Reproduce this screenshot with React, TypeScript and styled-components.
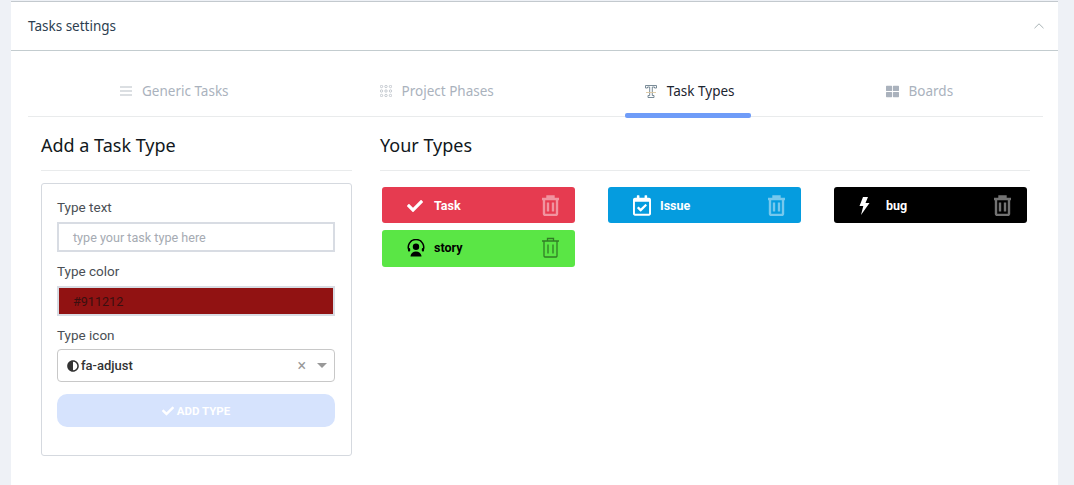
import React from 'react'
import styled, { createGlobalStyle } from 'styled-components'
import { FaAdjust, FaCheck, FaRegCalendarCheck, FaThLarge } from 'react-icons/fa'

const Global = createGlobalStyle`
  html, body {
    margin: 0;
    height: 485px;
    overflow: hidden;
    background: #eef1f6;
    font-family: Roboto, "Liberation Sans", sans-serif;
  }
`

const Card = styled.div`
  margin: 1px 16px 0 11px;
  height: 484px;
  background: #fff;
  border-top: 1px solid #c3c9ce;
  box-sizing: border-box;
`

const CardHeader = styled.div`
  height: 49px;
  box-sizing: border-box;
  border-bottom: 1px solid #c3cccf;
  padding: 0 14px 0 17px;
  display: flex;
  align-items: center;
  justify-content: space-between;
  font-family: "Noto Sans", sans-serif;
  font-size: 13.5px;
  color: #2c3e50;
`

const TabBar = styled.div`
  margin: 0 15px 0 17px;
  height: 66px;
  padding-left: 72px;
  box-sizing: border-box;
  border-bottom: 1px solid #e9ebec;
  display: flex;
  gap: 115px;
`

const Tab = styled.div<{ $active?: boolean }>`
  position: relative;
  display: flex;
  align-items: center;
  gap: 10px;
  padding: 15px 16px 0 20px;
  font-family: "Noto Sans", sans-serif;
  font-size: 13.5px;
  color: ${p => (p.$active ? '#1c2530' : '#aab2bd')};

  ${p =>
    p.$active &&
    `&::after {
      content: '';
      position: absolute;
      left: 0;
      right: 0;
      bottom: -2px;
      height: 5px;
      border-radius: 2px;
      background: #6f9cf8;
    }`}
`

const Columns = styled.div`
  display: flex;
  gap: 28px;
  padding: 0 28px 0 30px;
`

const LeftColumn = styled.div`
  width: 311px;
  flex: none;
`

const RightColumn = styled.div`
  flex: 1;
`

const ColumnTitle = styled.h3`
  margin: 0 0 12px;
  height: 54px;
  line-height: 56px;
  box-sizing: border-box;
  border-bottom: 1px solid #e9ebec;
  font-family: "Noto Sans", sans-serif;
  font-weight: 400;
  font-size: 18px;
  color: #111820;
`

const FormBox = styled.div`
  height: 273px;
  box-sizing: border-box;
  border: 1px solid #d5d9df;
  border-radius: 3px;
  padding: 14px 16px 0 15px;
`

const Label = styled.div`
  font-size: 13.5px;
  line-height: 18px;
  color: #4a4f55;
  margin-bottom: 6px;
`

const TextInput = styled.div<{ $bg?: string }>`
  height: 30px;
  box-sizing: border-box;
  border: 2px solid #d8dce3;
  background: ${p => p.$bg || '#fff'};
  display: flex;
  align-items: center;
  margin-bottom: 10px;
  padding-left: 14px;
  font-size: 12.6px;
  color: ${p => (p.$bg ? '#3a1010' : '#a6abb3')};
`

const SelectBox = styled.div`
  height: 33px;
  margin-top: -1px;
  box-sizing: border-box;
  border: 1px solid #c8c8c8;
  border-radius: 4px;
  display: flex;
  align-items: center;
  padding: 0 7px 0 9px;
  font-size: 13px;
  font-weight: 500;
  color: #333;
`

const SelectValue = styled.span`
  flex: 1;
  display: flex;
  align-items: center;
  gap: 2px;
`

const Clear = styled.span`
  color: #999;
  font-size: 16px;
  font-weight: 400;
  margin-right: 11px;
`

const Caret = styled.span`
  width: 0;
  height: 0;
  border-left: 5px solid transparent;
  border-right: 5px solid transparent;
  border-top: 5px solid #999;
`

const AddButton = styled.div`
  margin-top: 12px;
  height: 33px;
  border-radius: 10px;
  background: #d6e3fd;
  color: #fff;
  display: flex;
  align-items: center;
  justify-content: center;
  gap: 3px;
  font-size: 11.5px;
  font-weight: 700;
`

const TypeGrid = styled.div`
  display: grid;
  grid-template-columns: repeat(3, 192.5px);
  column-gap: 33.5px;
  row-gap: 7px;
  padding: 4px 0 0 2px;
`

const TypeChip = styled.div<{ $bg: string; $fg: string; $tall?: boolean }>`
  height: ${p => (p.$tall ? 37 : 36)}px;
  box-sizing: border-box;
  border-radius: 3px;
  background: ${p => p.$bg};
  color: ${p => p.$fg};
  display: flex;
  align-items: center;
  padding: ${p => (p.$tall ? '0 15px 2px 25px' : '1px 15px 0 25px')};
  font-size: 12.5px;
  font-weight: 700;
`

const ChipIcon = styled.span`
  width: 18px;
  display: flex;
  margin-right: 9px;
`

const ChipLabel = styled.span`
  flex: 1;
`

const TrashWrap = styled.span`
  display: flex;
  opacity: 0.45;
`

const TrashIcon = ({ thin }: { thin?: boolean }) => (
  <TrashWrap>
    <svg width="19" height="21" viewBox="0 0 19 21" fill="none" stroke="currentColor" strokeWidth={thin ? 1.3 : 2.4}>
      <path d="M1 4h17M6.500 4V1.500h6V4M3 4v15a1.300 1.300 0 0 0 1.300 1h10.400a1.300 1.300 0 0 0 1.300-1V4M7 7.500v9M12 7.500v9" />
    </svg>
  </TrashWrap>
)

const MenuIcon = () => (
  <svg width="12" height="10" viewBox="0 0 12 10" stroke="#b7bec5" strokeWidth="1">
    <path d="M0 1h12M0 5h12M0 9h12" />
  </svg>
)

const DotsIcon = () => (
  <svg width="12" height="12" viewBox="0 0 12 12" fill="none" stroke="#b7bec5" strokeWidth="0.8">
    {[1.5, 6, 10.5].map(y => [1.5, 6, 10.5].map(x => <circle key={`${x}-${y}`} cx={x} cy={y} r="1.200" />))}
  </svg>
)

const TextIcon = () => (
  <svg width="12" height="13" viewBox="0 0 12 13" fill="none" stroke="#6b7f8c" strokeWidth="0.9">
    <path d="M.5 3V.5h11V3H9.500V2H7.300v8.500H9v2H3v-2h1.700V2H2.500v1z" />
    <path d="M1 7.500h10" stroke="#dcc7a0" />
  </svg>
)

const BoltIcon = () => (
  <svg width="11" height="18" viewBox="0 0 11 18" fill="currentColor">
    <path d="M4 0h5L6.500 6H10.500L2 18l2.300-9H.5z" />
  </svg>
)

const AgentIcon = () => (
  <svg width="18" height="18" viewBox="0 0 18 18" fill="none" stroke="#000">
    <path d="M2.300 12A7.700 7.700 0 1 1 15.700 12" strokeWidth="1.500" />
    <circle cx="9" cy="7.800" r="3.200" fill="#000" stroke="none" />
    <path d="M3.500 17.500c0-3 2.500-5 5.500-5s5.500 2 5.500 5z" fill="#000" stroke="none" />
    <rect x="1" y="9" width="2.200" height="3.600" rx="1" fill="#000" stroke="none" />
    <rect x="14.800" y="9" width="2.200" height="3.600" rx="1" fill="#000" stroke="none" />
  </svg>
)

const Chevron = () => (
  <svg width="10" height="6" viewBox="0 0 10 6" fill="none" stroke="#a9b3b5" strokeWidth="1">
    <path d="M.5 5.200 5 .8l4.500 4.400" />
  </svg>
)

const App = () => (
  <>
    <Global />
    <Card>
      <CardHeader>
        <span>Tasks settings</span>
        <Chevron />
      </CardHeader>
      <TabBar>
        <Tab>
          <MenuIcon />
          Generic Tasks
        </Tab>
        <Tab>
          <DotsIcon />
          Project Phases
        </Tab>
        <Tab $active>
          <TextIcon />
          Task Types
        </Tab>
        <Tab>
          <FaThLarge size={13} />
          Boards
        </Tab>
      </TabBar>
      <Columns>
        <LeftColumn>
          <ColumnTitle>Add a Task Type</ColumnTitle>
          <FormBox>
            <Label>Type text</Label>
            <TextInput>type your task type here</TextInput>
            <Label>Type color</Label>
            <TextInput $bg="#911212">#911212</TextInput>
            <Label>Type icon</Label>
            <SelectBox>
              <SelectValue>
                <FaAdjust size={12} />
                fa-adjust
              </SelectValue>
              <Clear>×</Clear>
              <Caret />
            </SelectBox>
            <AddButton>
              <FaCheck size={12} />
              ADD TYPE
            </AddButton>
          </FormBox>
        </LeftColumn>
        <RightColumn>
          <ColumnTitle>Your Types</ColumnTitle>
          <TypeGrid>
            <TypeChip $bg="#e63b50" $fg="#fff">
              <ChipIcon>
                <FaCheck size={16} />
              </ChipIcon>
              <ChipLabel>Task</ChipLabel>
              <TrashIcon />
            </TypeChip>
            <TypeChip $bg="#059cdf" $fg="#fff">
              <ChipIcon>
                <FaRegCalendarCheck size={21} />
              </ChipIcon>
              <ChipLabel>Issue</ChipLabel>
              <TrashIcon />
            </TypeChip>
            <TypeChip $bg="#000" $fg="#fff">
              <ChipIcon>
                <BoltIcon />
              </ChipIcon>
              <ChipLabel>bug</ChipLabel>
              <TrashIcon />
            </TypeChip>
            <TypeChip $bg="#5ae645" $fg="#000" $tall>
              <ChipIcon>
                <AgentIcon />
              </ChipIcon>
              <ChipLabel>story</ChipLabel>
              <TrashIcon thin />
            </TypeChip>
          </TypeGrid>
        </RightColumn>
      </Columns>
    </Card>
  </>
)

export default App
